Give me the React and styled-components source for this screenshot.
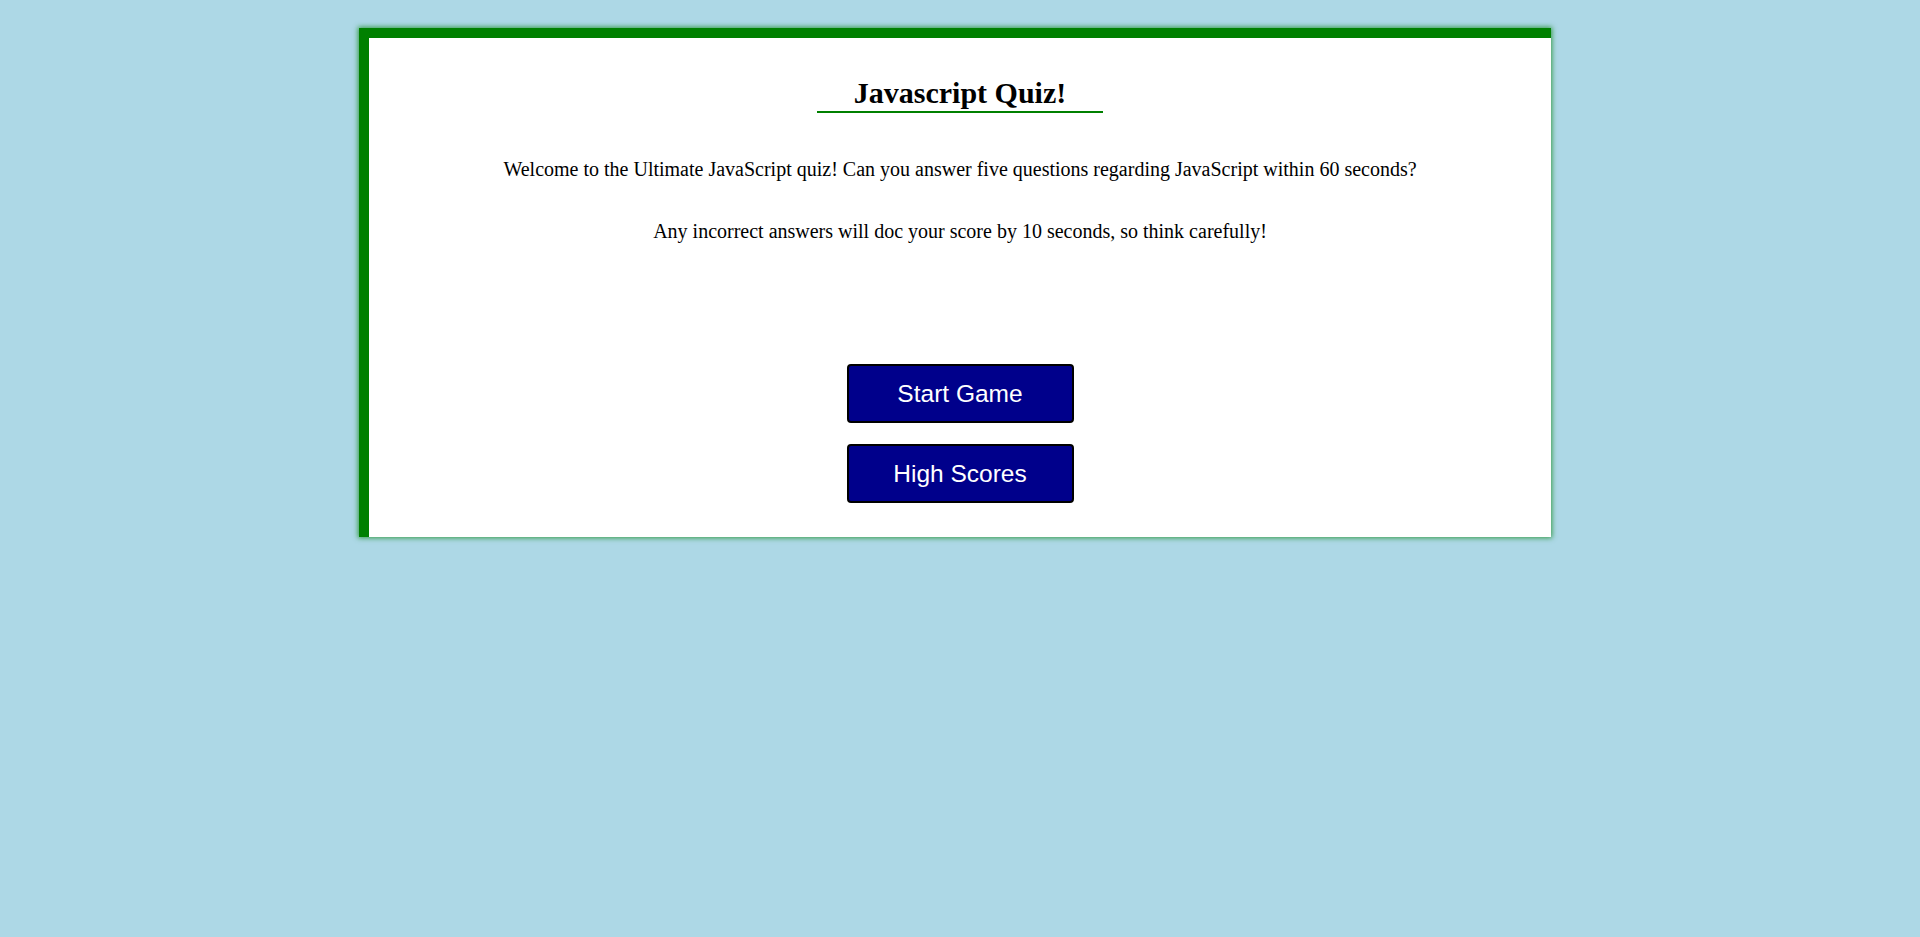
import React from 'react';
import styled, { createGlobalStyle } from 'styled-components';

const GlobalStyle = createGlobalStyle`
  html, body {
    margin: 0;
    padding: 0;
    background: lightblue;
    min-height: 100%;
  }
  body {
    font-family: "Liberation Serif", "Times New Roman", serif;
  }
`;

const Page = styled.div`
  min-height: 937px;
  background: lightblue;
  padding-top: 28px;
`;

const Card = styled.main`
  width: 1182px;
  margin-left: calc(50% - 601px);
  background: #fff;
  border-top: 10px solid green;
  border-left: 10px solid green;
  box-shadow: 0 0 5px 1px rgba(0, 128, 0, 0.7);
  padding: 37px 0 34px;
  display: flex;
  flex-direction: column;
  align-items: center;
  text-align: center;
`;

const Title = styled.h1`
  margin: 0;
  width: 286px;
  font-size: 30px;
  font-weight: bold;
  line-height: 36px;
  border-bottom: 2px solid green;
`;

const Intro = styled.p`
  margin: ${(p) => p.$top}px 0 0;
  font-size: 20px;
  line-height: 24px;
  color: #000;
`;

const Actions = styled.div`
  margin-top: 121px;
  display: flex;
  flex-direction: column;
  gap: 21px;
`;

const Button = styled.button`
  width: 227px;
  height: 59px;
  background: darkblue;
  color: #fff;
  border: 2px solid #000;
  border-radius: 4px;
  font-family: "Liberation Sans", Arial, sans-serif;
  font-size: 24.5px;
  cursor: pointer;
`;

const App = () => (
  <Page>
    <GlobalStyle />
    <Card>
      <Title>Javascript Quiz!</Title>
      <Intro $top={44}>
        Welcome to the Ultimate JavaScript quiz! Can you answer five questions regarding JavaScript within 60 seconds?
      </Intro>
      <Intro $top={38}>
        Any incorrect answers will doc your score by 10 seconds, so think carefully!
      </Intro>
      <Actions>
        <Button>Start Game</Button>
        <Button>High Scores</Button>
      </Actions>
    </Card>
  </Page>
);

export default App;
